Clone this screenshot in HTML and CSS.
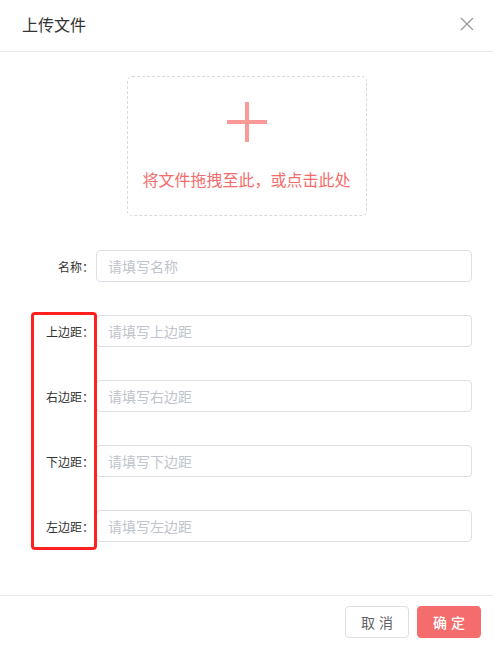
FILE: index.html
```html
<!DOCTYPE html>
<html lang="zh-CN">
<head>
<meta charset="utf-8">
<title>上传文件</title>
<link rel="stylesheet" href="styles.css">
</head>
<body>
<div class="dialog">
  <div class="header">
    <span class="title">上传文件</span>
    <svg class="close" width="14" height="14" viewBox="0 0 14 14"><path d="M1 1L13 13M13 1L1 13" stroke="#999" stroke-width="1.3" fill="none"/></svg>
  </div>
  <div class="body">
    <div class="upload">
      <svg class="plus" width="40" height="40" viewBox="0 0 40 40"><rect x="18" y="0" width="4" height="40" fill="#fa9a98"/><rect x="0" y="18" width="40" height="4" fill="#fa9a98"/></svg>
      <div class="upload-text">将文件拖拽至此，或点击此处</div>
    </div>
    <div class="form">
      <div class="row"><label class="label">名称：</label><div class="input">请填写名称</div></div>
      <div class="row"><label class="label">上边距：</label><div class="input">请填写上边距</div></div>
      <div class="row"><label class="label">右边距：</label><div class="input">请填写右边距</div></div>
      <div class="row"><label class="label">下边距：</label><div class="input">请填写下边距</div></div>
      <div class="row"><label class="label">左边距：</label><div class="input">请填写左边距</div></div>
      <div class="mark"></div>
    </div>
  </div>
  <div class="footer">
    <button class="btn">取消</button>
    <button class="btn primary">确定</button>
  </div>
</div>
</body>
</html>
```
FILE: styles.css
```css
* { box-sizing: border-box; }
html, body { margin: 0; padding: 0; background: #fff; }
body { font-family: "Noto Sans CJK SC", "Liberation Sans", sans-serif; color: #333; }
.dialog { width: 493px; height: 646px; display: flex; flex-direction: column; }
.header {
  height: 52px; border-bottom: 1px solid #e8e8e8;
  display: flex; align-items: center; justify-content: space-between;
  padding: 0 19px 4px 22px;
}
.title { font-size: 16px; color: #333; line-height: 20px; }
.close { display: block; }
.body { padding-top: 24px; flex: 1; }
.upload {
  width: 240px; height: 140px; margin: 0 auto;
  border: 1px dashed #d9d9d9; border-radius: 5px;
  display: flex; flex-direction: column; align-items: center;
  padding-top: 25px;
}
.plus { display: block; }
.upload-text { margin-top: 25px; font-size: 16px; line-height: 24px; color: #f56c6c; }
.form { position: relative; margin-top: 34px; display: flex; flex-direction: column; gap: 33px; }
.row { display: flex; align-items: center; height: 32px; }
.label { width: 94px; text-align: right; font-size: 12px; color: #333; white-space: nowrap; }
.input {
  margin-left: 2px; width: 376px; height: 32px;
  border: 1px solid #dcdfe6; border-radius: 4px;
  padding-left: 11px; font-size: 14px; line-height: 30px; color: #c0c4cc;
}
.mark {
  position: absolute; left: 31px; top: 62px; width: 66px; height: 238px;
  border: 3px solid #ff2020; border-radius: 4px;
}
.footer {
  height: 51px; border-top: 1px solid #e8e8e8;
  display: flex; justify-content: flex-end; gap: 8px;
  padding: 10px 12px 0 0;
}
.btn {
  width: 64px; height: 32px; border: 1px solid #dcdfe6; border-radius: 4px;
  background: #fff; color: #606266; font-size: 14px; letter-spacing: 4px; text-indent: 4px;
  font-family: "Noto Sans CJK SC", sans-serif; padding: 0; cursor: pointer;
}
.btn.primary { background: #f56c6c; border-color: #f56c6c; color: #fff; font-weight: 500; }
```
